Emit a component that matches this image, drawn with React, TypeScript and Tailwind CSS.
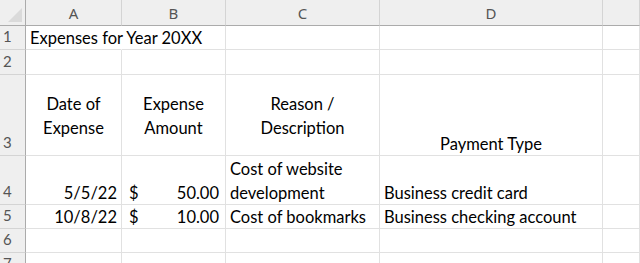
import React from 'react';

const grid = 'border-r border-b border-[#e1e1e1]';
const colHead = 'flex items-center justify-center border-r border-b border-r-[#d4d4d4] border-b-[#ababab] bg-[#efefef] text-[15px] text-[#555]';
const rowHead = 'flex items-end pl-[3px] pb-[1px] border-r border-b border-r-[#ababab] border-b-[#d4d4d4] bg-[#efefef] text-[15px] text-[#555]';

const Cell: React.FC<{ className?: string; children?: React.ReactNode }> = ({ className = '', children }) => (
  <div className={`${grid} flex flex-col justify-end overflow-visible whitespace-nowrap ${className}`}>
    {children}
  </div>
);

const Money: React.FC<{ value: string }> = ({ value }) => (
  <Cell>
    <div className="flex justify-between pl-[7px] pr-[6px] translate-y-[1px]">
      <span>$</span>
      <span>{value}</span>
    </div>
  </Cell>
);

const App: React.FC = () => {
  const rows = [1, 2, 3, 4, 5, 6, 7];
  return (
    <div
      className="h-[263px] w-[640px] overflow-hidden bg-white text-[16.5px] leading-[24px] text-black"
      style={{ fontFamily: 'Lato, "Noto Sans", sans-serif' }}
    >
      <div className="grid grid-cols-[26px_96px_104px_154px_223px_37px] grid-rows-[26px_24px_25px_81px_49px_24px_24px_24px]">
        {/* header row */}
        <div className="relative border-r border-b border-r-[#ababab] border-b-[#ababab] bg-[#efefef]">
          <svg className="absolute right-[3px] bottom-[3px]" width="14" height="14" viewBox="0 0 14 14">
            <polygon points="14,0 14,14 0,14" fill="#dadada" />
          </svg>
        </div>
        {['A', 'B', 'C', 'D', ''].map((c, i) => (
          <div key={i} className={colHead} style={{ fontFamily: '"Noto Sans", sans-serif' }}>
            {c}
          </div>
        ))}

        {/* row 1: title overflows into B, hiding the gridline */}
        <div className={rowHead}>1</div>
        <Cell className="pl-[4px] border-r-white">
          <span className="translate-y-[1px]">Expenses for Year 20XX</span>
        </Cell>
        <Cell />
        <Cell />
        <Cell />
        <Cell />

        {/* row 2 */}
        <div className={rowHead}>2</div>
        <Cell />
        <Cell />
        <Cell />
        <Cell />
        <Cell />

        {/* row 3 */}
        <div className={rowHead}>3</div>
        <Cell className="items-center justify-center! pt-[2px] text-center">
          <span>Date of</span>
          <span>Expense</span>
        </Cell>
        <Cell className="items-center justify-center! pt-[2px] text-center">
          <span>Expense</span>
          <span>Amount</span>
        </Cell>
        <Cell className="items-center justify-center! pt-[2px] text-center">
          <span>Reason /</span>
          <span>Description</span>
        </Cell>
        <Cell className="items-center"><span className="translate-y-[1px]">Payment Type</span></Cell>
        <Cell />

        {/* row 4 */}
        <div className={rowHead}>4</div>
        <Cell className="items-end pr-[4px]"><span className="translate-y-[1px]">5/5/22</span></Cell>
        <Money value="50.00" />
        <Cell className="pl-[4px]">
          <span className="translate-y-[1px]">Cost of website</span>
          <span className="translate-y-[1px]">development</span>
        </Cell>
        <Cell className="pl-[4px]"><span className="translate-y-[1px]">Business credit card</span></Cell>
        <Cell />

        {/* row 5 */}
        <div className={rowHead}>5</div>
        <Cell className="items-end pr-[4px]"><span className="translate-y-[1px]">10/8/22</span></Cell>
        <Money value="10.00" />
        <Cell className="pl-[4px]"><span className="translate-y-[1px]">Cost of bookmarks</span></Cell>
        <Cell className="pl-[4px]"><span className="translate-y-[1px]">Business checking account</span></Cell>
        <Cell />

        {/* rows 6-7 */}
        {rows.slice(5).map((r) => (
          <React.Fragment key={r}>
            <div className={rowHead}>{r}</div>
            <Cell />
            <Cell />
            <Cell />
            <Cell />
            <Cell />
          </React.Fragment>
        ))}
      </div>
    </div>
  );
};

export default App;
